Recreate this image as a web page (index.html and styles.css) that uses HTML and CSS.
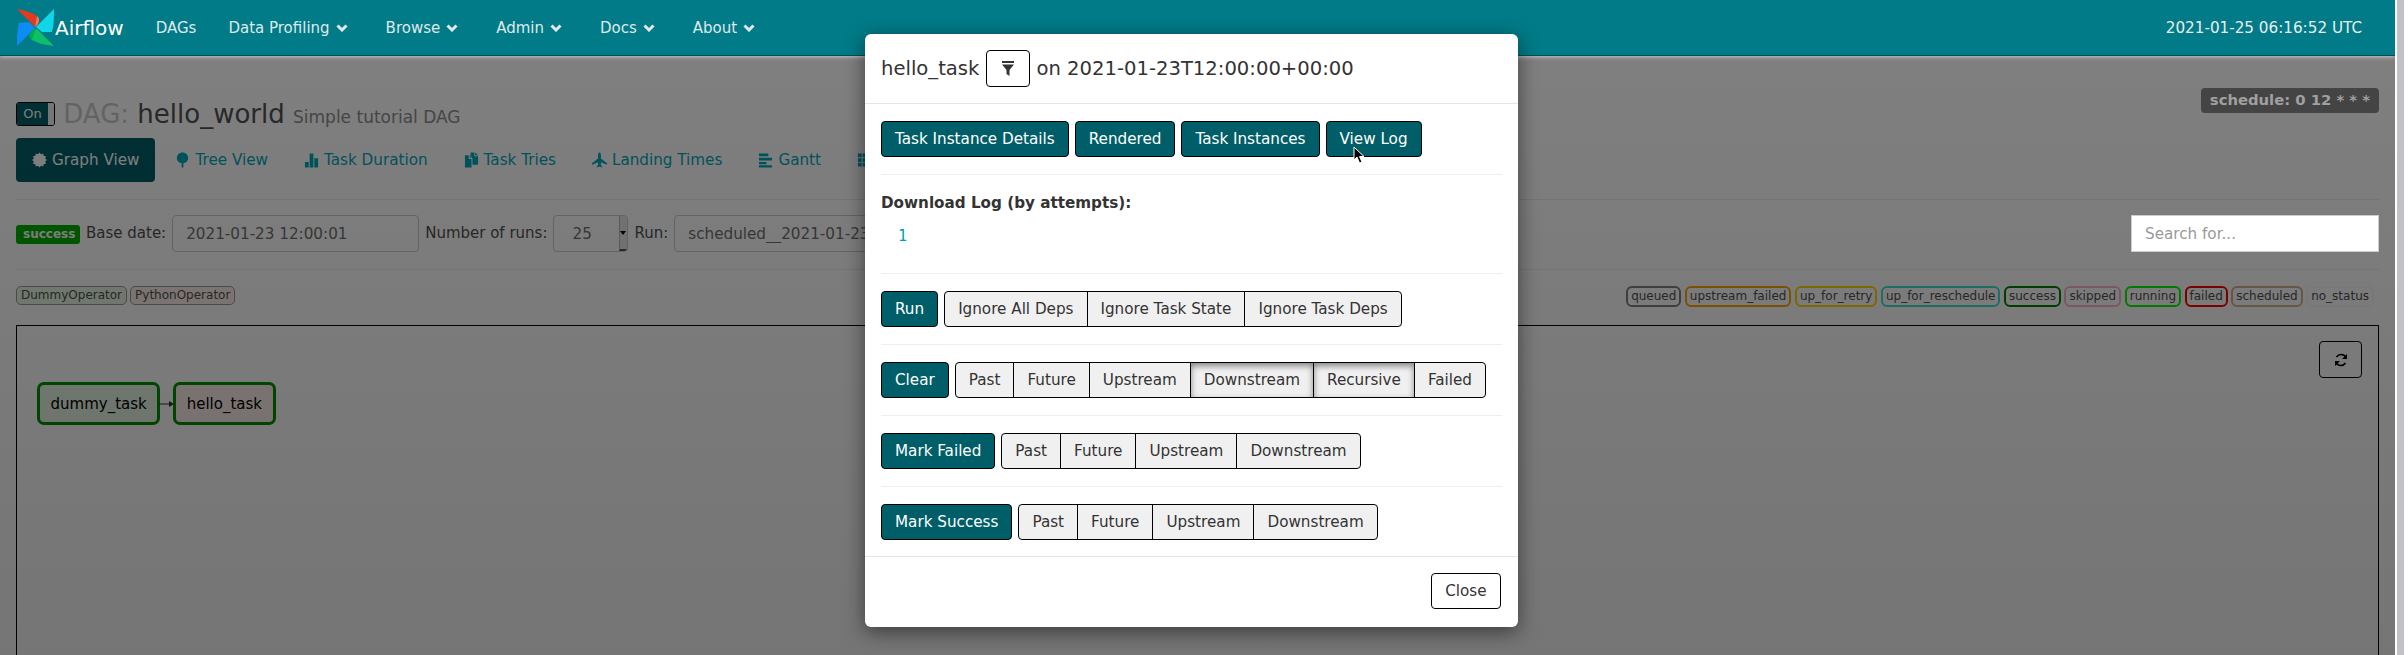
FILE: index.html
```html
<!DOCTYPE html>
<html lang="en">
<head>
    <meta charset="UTF-8">
    <title>Airflow - hello_world</title>
    <link rel="stylesheet" href="styles.css">
</head>
<body>
    <nav class="navbar">
        <a class="brand" href="#">
            <svg class="logo" viewBox="0 0 39 38" width="39" height="38">
                <path fill="#e43921" d="M1 0 L19 18 L21 7 C15 3 8 1 1 0Z"/>
                <path fill="#ff7557" d="M19 18 L21 7 C24 9 24 14 19 18Z"/>
                <path fill="#11d5e8" d="M38 0 L20 18 L26 23 L36 23 C38 15 38 8 38 0Z"/>
                <path fill="#0c8cf5" d="M1 37 L19 19 L13 13 L3 14 C1 22 1 30 1 37Z"/>
                <path fill="#0dbf6a" d="M38 37 L21 20 L13 26 L16 31 C23 35 31 36 38 37Z"/>
                <path fill="#00ad46" d="M20 19 L16 31 C12 28 13 23 20 19Z"/>
            </svg>
            <span class="brand-name">Airflow</span>
        </a>
        <ul class="nav-links">
            <li>DAGs</li>
            <li>Data Profiling<svg class="chev" viewBox="0 0 12 8" width="12" height="8"><path d="M1.500 1.500 6 6 10.500 1.500"/></svg></li>
            <li>Browse<svg class="chev" viewBox="0 0 12 8" width="12" height="8"><path d="M1.500 1.500 6 6 10.500 1.500"/></svg></li>
            <li>Admin<svg class="chev" viewBox="0 0 12 8" width="12" height="8"><path d="M1.500 1.500 6 6 10.500 1.500"/></svg></li>
            <li>Docs<svg class="chev" viewBox="0 0 12 8" width="12" height="8"><path d="M1.500 1.500 6 6 10.500 1.500"/></svg></li>
            <li>About<svg class="chev" viewBox="0 0 12 8" width="12" height="8"><path d="M1.500 1.500 6 6 10.500 1.500"/></svg></li>
        </ul>
        <div class="clock">2021-01-25 06:16:52 UTC</div>
    </nav>

    <main class="page">
        <div class="dag-head">
            <h4 class="dag-title">
                <span class="toggle"><span class="toggle-on">On</span><span class="toggle-knob"></span></span>
                <span class="dag-word">DAG:</span> hello_world <small>Simple tutorial DAG</small>
            </h4>
            <span class="schedule">schedule: 0 12 * * *</span>
        </div>
        <ul class="tabs">
            <li class="active">
                <svg class="tab-icon" viewBox="0 0 16 16"><path d="M16 8 14.090 9.630 14.930 12 12.450 12.450 12 14.930 9.630 14.090 8 16 6.370 14.090 4 14.930 3.550 12.450 1.070 12 1.910 9.630 0 8 1.910 6.370 1.070 4 3.550 3.550 4 1.070 6.370 1.910 8 0 9.630 1.910 12 1.070 12.450 3.550 14.930 4 14.090 6.370Z"/></svg>
                Graph View
            </li>
            <li>
                <svg class="tab-icon" viewBox="0 0 16 16"><path d="M8 0C11.500 0 14 2.500 14 6C14 9 11.500 11 9 11.300V16H7V11.300C4.500 11 2 9 2 6C2 2.500 4.500 0 8 0Z"/></svg>
                Tree View
            </li>
            <li>
                <svg class="tab-icon" viewBox="0 0 16 16"><path d="M1 10H5V16H1ZM6 1H10V16H6ZM11 6H15V16H11Z"/></svg>
                Task Duration
            </li>
            <li>
                <svg class="tab-icon" viewBox="0 0 16 16"><path d="M1 3H5V7H8V16H1ZM6 3 8 5.500H6ZM7 0H11V4H15V13H9V6L7 3.500ZM12 0 15 3H12Z"/></svg>
                Task Tries
            </li>
            <li>
                <svg class="tab-icon" viewBox="0 0 16 16"><path d="M8 0C9 0 9.500 1.500 9.500 3V6.500L16 11.500V13L9.500 10.500V13.500L11 15V16L8 15L5 16V15L6.500 13.500V10.500L0 13V11.500L6.500 6.500V3C6.500 1.500 7 0 8 0Z"/></svg>
                Landing Times
            </li>
            <li>
                <svg class="tab-icon" viewBox="0 0 16 16"><path d="M1 1H11V4H1ZM1 5.500H15V8.500H1ZM1 10H9V12.500H1ZM1 13.500H15V16H1Z"/></svg>
                Gantt
            </li>
            <li>
                <svg class="tab-icon" viewBox="0 0 16 16"><path d="M1 1H5V5H1ZM6 1H10V5H6ZM11 1H15V5H11ZM1 6H5V10H1ZM6 6H10V10H6ZM11 6H15V10H11ZM1 11H5V15H1ZM6 11H10V15H6ZM11 11H15V15H11Z"/></svg>
                Details
            </li>
        </ul>
        <hr class="rule">
        <div class="filters">
            <span class="state-badge">success</span>
            <label>Base date:</label>
            <input class="field date-field" value="2021-01-23 12:00:01">
            <label>Number of runs:</label>
            <span class="field runs-field">25<span class="spin"><span class="caret"></span></span></span>
            <label>Run:</label>
            <input class="field run-field" value="scheduled__2021-01-23T12:00:00+00:00">
            <input class="search" placeholder="Search for...">
        </div>
        <hr class="rule">
        <div class="legend">
            <div class="legend-group">
                <span class="op op-dummy">DummyOperator</span>
                <span class="op op-python">PythonOperator</span>
            </div>
            <div class="legend-group states">
                <span class="st st-queued">queued</span>
                <span class="st st-upstream">upstream_failed</span>
                <span class="st st-retry">up_for_retry</span>
                <span class="st st-resched">up_for_reschedule</span>
                <span class="st st-success">success</span>
                <span class="st st-skipped">skipped</span>
                <span class="st st-running">running</span>
                <span class="st st-failed">failed</span>
                <span class="st st-scheduled">scheduled</span>
                <span class="st st-none">no_status</span>
            </div>
        </div>
        <div class="graph">
            <button class="refresh">
                <svg viewBox="0 0 16 16" width="16" height="16"><path fill="none" stroke="#000" stroke-width="1.600" d="M13 5.500A5.500 5.500 0 0 0 3.500 5M3 10.500A5.500 5.500 0 0 0 12.500 11"/><path d="M14 2V7H9ZM2 14V9H7Z"/></svg>
            </button>
            <div class="node-row">
                <span class="node node-dummy">dummy_task</span>
                <svg class="edge" viewBox="0 0 15 8" width="15" height="8"><path d="M0 4H10" stroke="#333" stroke-width="1"/><path fill="#333" d="M10 1 15 4 10 7Z"/></svg>
                <span class="node node-python">hello_task</span>
            </div>
        </div>
    </main>

    <div class="backdrop"></div>
    <div class="scrollbar"><div class="thumb"></div></div>

    <section class="modal">
        <header class="modal-head">
            <span>hello_task</span>
            <button class="btn filter-btn">
                <svg viewBox="0 0 14 16" width="14" height="16"><path fill="#333" d="M1 0H13V2H1ZM1 3.500H13L8.500 9V15L5.500 13V9Z"/></svg>
            </button>
            <span>on 2021-01-23T12:00:00+00:00</span>
        </header>
        <div class="modal-body">
            <div class="row">
                <button class="btn primary">Task Instance Details</button>
                <button class="btn primary">Rendered</button>
                <button class="btn primary">Task Instances</button>
                <button class="btn primary">View Log</button>
            </div>
            <hr class="sep">
            <div class="log-block">
                <strong>Download Log (by attempts):</strong>
                <a class="attempt" href="#">1</a>
            </div>
            <hr class="sep">
            <div class="row">
                <button class="btn primary">Run</button>
                <div class="group">
                    <button class="btn">Ignore All Deps</button>
                    <button class="btn">Ignore Task State</button>
                    <button class="btn">Ignore Task Deps</button>
                </div>
            </div>
            <hr class="sep">
            <div class="row">
                <button class="btn primary">Clear</button>
                <div class="group">
                    <button class="btn">Past</button>
                    <button class="btn">Future</button>
                    <button class="btn">Upstream</button>
                    <button class="btn pressed">Downstream</button>
                    <button class="btn pressed">Recursive</button>
                    <button class="btn">Failed</button>
                </div>
            </div>
            <hr class="sep">
            <div class="row">
                <button class="btn primary">Mark Failed</button>
                <div class="group">
                    <button class="btn">Past</button>
                    <button class="btn">Future</button>
                    <button class="btn">Upstream</button>
                    <button class="btn">Downstream</button>
                </div>
            </div>
            <hr class="sep">
            <div class="row">
                <button class="btn primary">Mark Success</button>
                <div class="group">
                    <button class="btn">Past</button>
                    <button class="btn">Future</button>
                    <button class="btn">Upstream</button>
                    <button class="btn">Downstream</button>
                </div>
            </div>
        </div>
        <footer class="modal-foot">
            <button class="btn close-btn">Close</button>
        </footer>
        <svg class="cursor" viewBox="0 0 13 18" width="13" height="18"><path fill="#000" stroke="#fff" stroke-width="1" d="M1 1V14L4 11L6.500 17L9 16L6.500 10.500H11Z"/></svg>
    </section>
</body>
</html>
```

FILE: styles.css
```css
* { box-sizing: border-box; }
html, body { margin: 0; height: 655px; overflow: hidden; }
body { font-family: "DejaVu Sans", sans-serif; font-size: 15.2px; color: #51504f; background: #fff; position: relative; }
ul { list-style: none; margin: 0; padding: 0; }

/* top bar sits above the backdrop */
.navbar { position: relative; z-index: 3; display: flex; align-items: center; height: 56px; width: 2395px; background: #017b87; border-bottom: 1px solid #014d55; box-shadow: 0 1px 4px rgba(230, 230, 230, .7); color: #fff; padding: 0 33px 0 16px; }
.brand { display: flex; align-items: center; color: #fff; text-decoration: none; }
.logo { display: block; }
.brand-name { font-size: 20px; }
.nav-links { display: flex; margin-left: 32px; color: #dfe9ea; font-size: 15px; }
.nav-links li { display: flex; align-items: center; margin-right: 32px; white-space: nowrap; }
.chev { margin: 0 6px; fill: none; stroke: #dfe9ea; stroke-width: 3; }
.clock { margin-left: auto; color: #e9eeef; }

.page { width: 2395px; height: 599px; overflow: hidden; padding: 32px 16px 0; }
.dag-head { display: flex; justify-content: space-between; align-items: flex-start; height: 50px; }
.dag-title { margin: 14px 0 0; font-size: 26px; font-weight: 400; color: #51504f; line-height: 24px; white-space: nowrap; }
.dag-title small { font-size: 17px; color: #8c8c8c; }
.dag-word { color: #c8c8c8; }
.toggle { display: inline-flex; vertical-align: top; width: 39px; height: 24px; border: 1px solid #000; border-radius: 3px; overflow: hidden; background: #fff; font-size: 13px; }
.toggle-on { flex: 1; background: #005e68; color: #fff; text-align: center; line-height: 22px; }
.toggle-knob { width: 6px; background: #eee; }
.schedule { position: relative; z-index: 2; height: 25px; line-height: 24px; background: #444; color: #a0a0a0; font-weight: 700; font-size: 14.800px; border-radius: 4px; padding: 0 9px; white-space: nowrap; }

.tabs { display: flex; gap: 4px; color: #00a7b8; }
.tabs li { display: flex; align-items: center; gap: 5px; padding: 0 16px; height: 44px; border-radius: 4px; white-space: nowrap; }
.tabs li.active { background: #005e68; color: #fff; }
.tab-icon { width: 15px; height: 16px; fill: currentColor; }
.rule { margin: 17px 0 15px; border: 0; border-top: 1px solid #eee; }

.filters { display: flex; align-items: center; height: 37px; gap: 6px; color: #51504f; }
.filters label { white-space: nowrap; margin-bottom: 2px; font-size: 15px; }
.state-badge { background: #00b000; color: #fff; font-size: 12px; font-weight: 700; padding: 0 7px; border-radius: 3px; line-height: 19px; width: 64px; margin-bottom: -1px; }
.field { display: flex; align-items: center; height: 37px; border: 1px solid #ccc; border-radius: 4px; padding: 0 13px; font: inherit; color: #707070; background: #fff; }
.date-field { width: 247px; }
.runs-field { width: 75px; position: relative; padding-left: 18px; overflow: hidden; }
.spin { position: absolute; right: 0; top: 0; bottom: 0; width: 8px; background: #e8e8e8; border-left: 1px solid #bbb; border-bottom: 2px solid #555; }
.caret { position: absolute; right: 1px; top: 15px; border: 3px solid transparent; border-top: 4px solid #000; }
.run-field { width: 600px; }
.search { position: relative; z-index: 2; margin-left: auto; width: 248px; height: 37px; border: 1px solid #ccc; padding: 0 13px; font: inherit; color: #555; background: #fff; }
.search::placeholder { color: #999; }

.legend { display: flex; justify-content: space-between; align-items: flex-start; margin-top: 16px; height: 21px; font-size: 12px; color: #51504f; }
.legend-group { display: flex; gap: 3px; }
.states { gap: 3.500px; padding-right: 5px; }
.op { border: 1px solid #999; border-radius: 5px; padding: 0 4px; line-height: 17px; }
.op-dummy { background: #e8f7e4; }
.op-python { background: #ffefeb; }
.st { border: 2px solid #ccc; border-radius: 6px; padding: 0 3px; line-height: 17px; background: #fff; }
.st-queued { border-color: gray; }
.st-upstream { border-color: orange; }
.st-retry { border-color: gold; }
.st-resched { border-color: turquoise; }
.st-success { border-color: #008000; }
.st-skipped { border-color: #ffb6c4; }
.st-running { border-color: lime; }
.st-failed { border-color: red; }
.st-scheduled { border-color: tan; }
.st-none { border-color: #f9f9f9; }

.graph { position: relative; margin-top: 18px; height: 330px; border: 1px solid #000; border-bottom: 0; }
.refresh { position: absolute; top: 15px; right: 16px; width: 43px; height: 37px; background: #fff; border: 1px solid #000; border-radius: 4px; display: flex; align-items: center; justify-content: center; padding: 0; }
.node-row { display: flex; align-items: center; padding: 56px 0 0 20px; }
.node { display: block; height: 43px; line-height: 39px; font-size: 15px; border: 3px solid #009000; border-radius: 7px; color: #000; padding: 0 10.500px; white-space: nowrap; }
.node-dummy { background: #e8f7e4; }
.node-python { background: #ffefeb; }
.edge { margin: 0 -1px; }

.backdrop { position: absolute; z-index: 1; left: 0; top: 0; width: 2395px; height: 655px; background: linear-gradient(rgba(0, 0, 0, .5) 60px, rgba(0, 0, 0, .54)); }
.scrollbar { position: absolute; z-index: 2; right: 0; top: 0; width: 13px; height: 655px; background: #fff; }
.thumb { width: 7px; height: 100%; margin-left: 2px; background: #c1c1c6; }

.modal { position: absolute; z-index: 4; left: 865px; top: 34px; width: 653px; height: 593px; background: #fff; border-radius: 6px; box-shadow: 0 5px 20px rgba(0, 0, 0, .5); color: #333; }
.modal-head { display: flex; align-items: center; height: 70px; padding: 0 16px; border-bottom: 1px solid #e5e5e5; font-size: 19.600px; white-space: nowrap; }
.modal-body { padding: 17px 16px 0; height: 452px; }
.row { display: flex; gap: 6px; }
.btn { display: block; height: 36px; font: inherit; color: #333; background: #f0f0f0; border: 1px solid #000; border-radius: 4px; padding: 0 13px; white-space: nowrap; }
.primary { background: #005e68; color: #fff; }
.group { display: flex; }
.group .btn { border-radius: 0; margin-left: -1px; }
.group .btn:first-child { border-radius: 4px 0 0 4px; margin-left: 0; }
.group .btn:last-child { border-radius: 0 4px 4px 0; }
.pressed { box-shadow: inset 0 3px 6px rgba(0, 0, 0, .45); }
.filter-btn { width: 44px; height: 37px; margin: 0 6px 0 7px; background: #fff; display: flex; align-items: center; justify-content: center; padding: 0; }
.sep { margin: 17px 0; border: 0; border-top: 1px solid #eee; }
.log-block { height: 64px; }
.log-block strong { display: block; line-height: 22px; }
.attempt { display: block; margin: 11px 0 0 17px; color: #00a0b4; text-decoration: none; line-height: 22px; font-family: "DejaVu Sans Mono", monospace; }
.modal-foot { display: flex; justify-content: flex-end; padding: 16px 17px; border-top: 1px solid #e5e5e5; }
.close-btn { background: #fff; padding: 0 13.500px; }
.cursor { position: absolute; left: 488px; top: 112px; }
```
